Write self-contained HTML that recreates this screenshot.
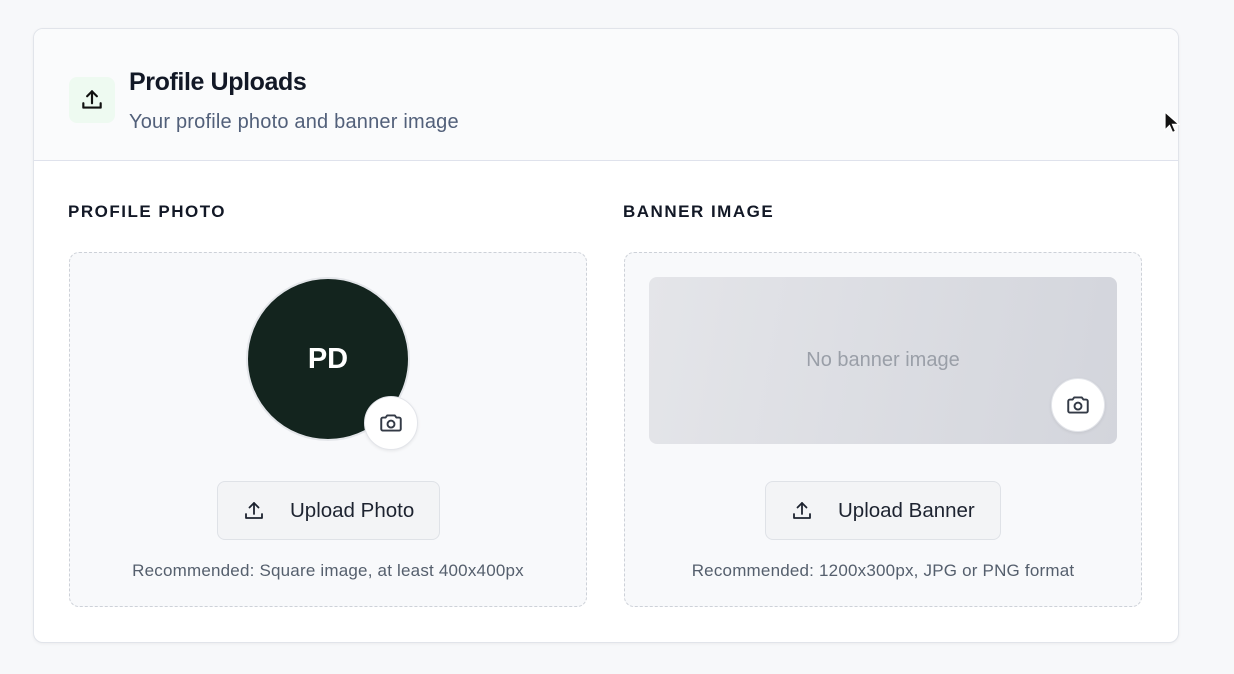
<!DOCTYPE html>
<html><head><style>
*{box-sizing:border-box;margin:0;padding:0}
body{width:1234px;height:674px;background:#f7f8fa;font-family:"Liberation Sans",sans-serif;position:relative;overflow:hidden}
.card{position:absolute;left:33px;top:28px;width:1146px;height:615px;background:#fff;border:1px solid #e1e4ea;border-radius:10px;overflow:hidden;box-shadow:0 1px 3px rgba(0,0,0,.05)}
.hdr{position:absolute;left:0;top:0;width:100%;height:132px;background:#fafbfc;border-bottom:1px solid #dfe2ec}
.ib{position:absolute;left:35px;top:48px;width:46px;height:46px;border-radius:8px;background:#eefaf1;display:flex;align-items:center;justify-content:center}
.t{position:absolute;left:95px;top:39px;font-size:25px;font-weight:bold;color:#121826;letter-spacing:-.4px}
.s{position:absolute;left:95px;top:82px;font-size:20px;color:#52607a;letter-spacing:.2px}
.lbl{position:absolute;top:173px;font-size:17px;font-weight:bold;letter-spacing:1.5px;color:#121826}
.box{position:absolute;top:223px;width:518px;height:355px;border:1.5px dashed #cdd1d8;border-radius:10px;background:#f8f9fb}
.btn{position:absolute;top:228px;height:59px;border:1px solid #dfe2e7;border-radius:8px;background:#f3f4f6;display:flex;align-items:center;font-size:20.5px;color:#1d2330}
.rec{position:absolute;top:308px;width:100%;text-align:center;font-size:17px;color:#555f6d;letter-spacing:.2px}
.cam{position:absolute;width:54px;height:54px;border-radius:50%;background:#fff;border:1px solid #e3e5ea;display:flex;align-items:center;justify-content:center;box-shadow:0 1px 3px rgba(0,0,0,.08)}
</style></head><body>
<div class="card">
 <div class="hdr">
  <div class="ib"><svg width="26" height="26" viewBox="0 0 24 24" fill="none" stroke="#111" stroke-width="2" stroke-linecap="round" stroke-linejoin="round"><path d="M4 15v4h16v-4"/><path d="M12 15V4"/><path d="M7.5 8.5 12 4l4.5 4.5"/></svg></div>
  <div class="t">Profile Uploads</div>
  <div class="s">Your profile photo and banner image</div>
 </div>
 <div class="lbl" style="left:34px">PROFILE PHOTO</div>
 <div class="lbl" style="left:589px">BANNER IMAGE</div>
 <div class="box" style="left:35px">
  <div style="position:absolute;left:176px;top:24px;width:164px;height:164px;border-radius:50%;background:#13241e;border:2px solid #e4e6ea;display:flex;align-items:center;justify-content:center;color:#fff;font-size:29px;font-weight:bold">PD</div>
  <div class="cam" style="left:294px;top:143px"><svg width="26" height="26" viewBox="0 0 24 24" fill="none" stroke="#333a46" stroke-width="1.8" stroke-linejoin="round"><path d="M3 8.5a1.5 1.5 0 0 1 1.5-1.5H7l1.5-2h7L17 7h2.5A1.5 1.5 0 0 1 21 8.5v9a1.5 1.5 0 0 1-1.5 1.5h-15A1.5 1.5 0 0 1 3 17.5z"/><circle cx="12" cy="13" r="3.2"/></svg></div>
  <div class="btn" style="left:147px;width:223px"><svg style="margin-left:24px" width="24" height="24" viewBox="0 0 24 24" fill="none" stroke="#1d2330" stroke-width="1.8" stroke-linecap="round" stroke-linejoin="round"><path d="M4 15v4h16v-4"/><path d="M12 15V4"/><path d="M7.5 8.5 12 4l4.5 4.5"/></svg><span style="margin-left:24px">Upload Photo</span></div>
  <div class="rec">Recommended: Square image, at least 400x400px</div>
 </div>
 <div class="box" style="left:590px">
  <div style="position:absolute;left:24px;top:24px;width:468px;height:167px;border-radius:8px;background:linear-gradient(100deg,#e4e5e9,#d3d5dc);display:flex;align-items:center;justify-content:center;font-size:20px;color:#9a9fa8">No banner image</div>
  <div class="cam" style="left:426px;top:125px"><svg width="26" height="26" viewBox="0 0 24 24" fill="none" stroke="#333a46" stroke-width="1.8" stroke-linejoin="round"><path d="M3 8.5a1.5 1.5 0 0 1 1.5-1.5H7l1.5-2h7L17 7h2.5A1.5 1.5 0 0 1 21 8.5v9a1.5 1.5 0 0 1-1.5 1.5h-15A1.5 1.5 0 0 1 3 17.5z"/><circle cx="12" cy="13" r="3.2"/></svg></div>
  <div class="btn" style="left:140px;width:236px"><svg style="margin-left:24px" width="24" height="24" viewBox="0 0 24 24" fill="none" stroke="#1d2330" stroke-width="1.8" stroke-linecap="round" stroke-linejoin="round"><path d="M4 15v4h16v-4"/><path d="M12 15V4"/><path d="M7.5 8.5 12 4l4.5 4.5"/></svg><span style="margin-left:24px">Upload Banner</span></div>
  <div class="rec">Recommended: 1200x300px, JPG or PNG format</div>
 </div>
</div>
<svg style="position:absolute;left:1164px;top:111px" width="16" height="24" viewBox="0 0 16 24"><path d="M1 1v18l4.5-4.5 3 7 3-1.3-3-6.8H15z" fill="#111" stroke="#fff" stroke-width="1.2"/></svg>
</body></html>
